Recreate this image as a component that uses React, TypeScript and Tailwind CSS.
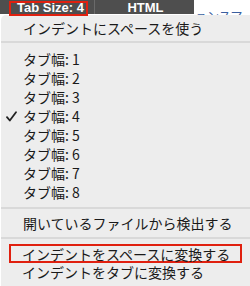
import React from "react";

const jp = { fontFamily: '"Noto Sans CJK JP", "Noto Sans", sans-serif' };

function Item({ label, checked }: { label: string; checked?: boolean }) {
  return (
    <div className="relative h-[19px] flex items-center pl-[22px] text-[14px] leading-none text-[#1a1a1a]">
      {checked && (
        <svg className="absolute left-[5px] top-[5px]" width="11" height="11" viewBox="0 0 11 11">
          <path d="M1 6.2 L3.8 9.5 L10 1.2" fill="none" stroke="#222" strokeWidth="1.8" strokeLinecap="round" strokeLinejoin="round" />
        </svg>
      )}
      <span>{label}</span>
    </div>
  );
}

function Sep({ h, at }: { h: string; at: string }) {
  return (
    <div className={`${h} relative`}>
      <div className={`absolute left-0 right-0 ${at} h-[2px] bg-[#d9d9d9]`} />
    </div>
  );
}

export default function App() {
  return (
    <div className="relative w-[250px] h-[286px] bg-white overflow-hidden" style={jp}>
      <div className="h-[15px] flex">
        <div className="w-[194px] h-[14px] flex bg-[#4e4e4e]">
          <div className="w-[95px] h-full relative flex items-center border-r border-[#6a6a6a]">
            <div className="absolute left-[9px] top-[1px] w-[79px] h-[15px] border-2 border-[#e0200f]" />
            <span className="ml-[17px] text-[13px] font-bold text-white leading-none" style={{ fontFamily: '"Liberation Sans", Arial, sans-serif' }}>
              Tab Size: 4
            </span>
          </div>
          <div className="flex-1 flex items-center justify-center pl-[2px]">
            <span className="text-[13px] font-bold text-white leading-none" style={{ fontFamily: '"Liberation Sans", Arial, sans-serif' }}>
              HTML
            </span>
          </div>
        </div>
        <div className="flex-1 overflow-hidden pl-[1px] pt-[10px] text-[12px] leading-none text-[#3a5fa0] whitespace-nowrap">
          ョンスマー
        </div>
      </div>
      <div className="bg-[#ededed] rounded-tl-[5px] h-[271px] pt-[3px] ml-[1px]">
        <Item label="インデントにスペースを使う" />
        <Sep h="h-[12px]" at="top-[4px]" />
        {[1, 2, 3, 4, 5, 6, 7, 8].map((n) => (
          <Item key={n} label={`タブ幅: ${n}`} checked={n === 4} />
        ))}
        <Sep h="h-[12px]" at="top-[6px]" />
        <Item label="開いているファイルから検出する" />
        <Sep h="h-[12px]" at="top-[5px]" />
        <div className="ml-[8px] mr-[8px] h-[19px] border-2 border-[#e0200f] flex items-center pl-[11px] text-[14px] leading-none text-[#1a1a1a]">
          インデントをスペースに変換する
        </div>
        <div className="h-[18px] flex items-center pl-[21px] text-[14px] leading-none text-[#1a1a1a]">
          インデントをタブに変換する
        </div>
      </div>
    </div>
  );
}
